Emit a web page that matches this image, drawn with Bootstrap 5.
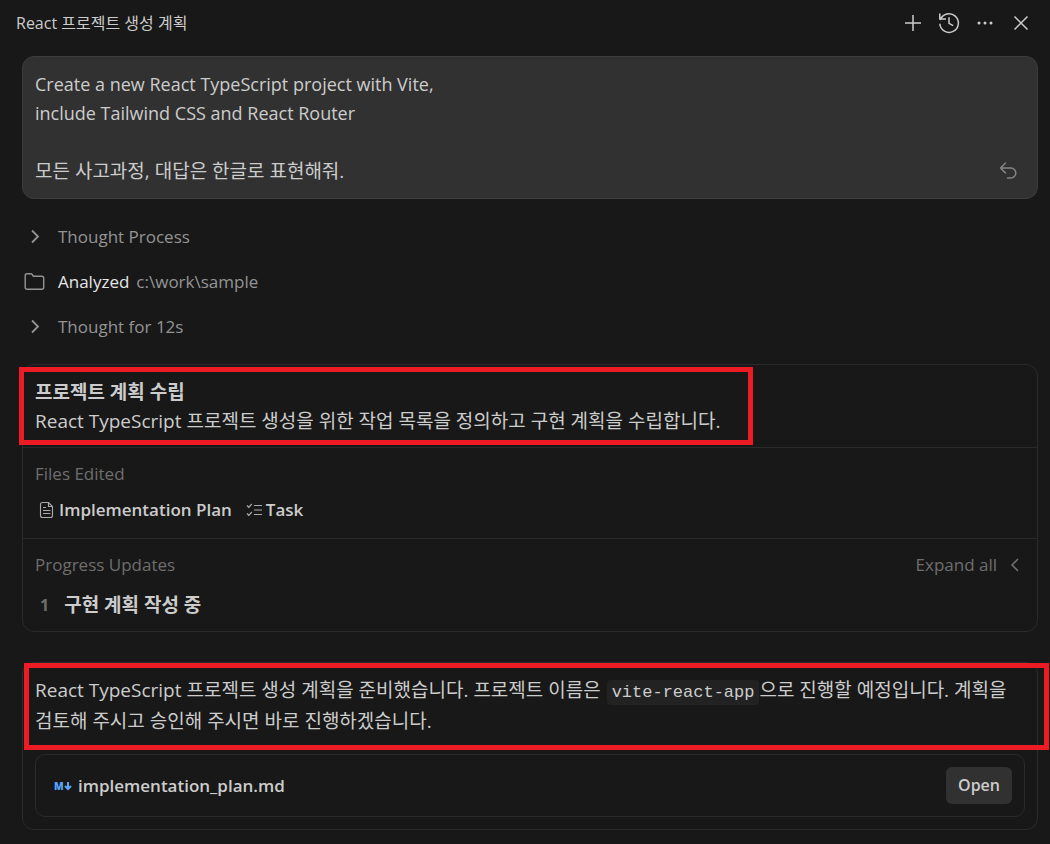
<!DOCTYPE html>
<html lang="ko" data-bs-theme="dark">
<head>
<meta charset="utf-8">
<meta name="viewport" content="width=device-width, initial-scale=1">
<title>React 프로젝트 생성 계획</title>
<link href="https://cdn.jsdelivr.net/npm/bootstrap@5.3.0/dist/css/bootstrap.min.css" rel="stylesheet">
<script src="https://cdn.jsdelivr.net/npm/bootstrap@5.3.0/dist/js/bootstrap.bundle.min.js" defer></script>
<style>
  :root { --line: #2b2b2b; --ink: #cccccc; --dim: #949494; --faint: #6e6e6e; --field: #313131; }
  body { background: #181818; color: var(--ink); font-family: "Open Sans", "Noto Sans CJK KR", sans-serif; font-size: 19px; line-height: 29px; }
  svg { flex: none; fill: none; stroke: currentColor; overflow: visible; }

  .topbar { height: 46px; padding: 0 17px 0 16px; }
  .topbar h1 { font-size: 16px; line-height: 24px; color: var(--ink); }
  .tools { gap: 12px; }
  .plain-btn { display: flex; align-items: center; padding: 0; border: 0; background: none; color: var(--ink); }
  .plain-btn:hover { color: #ffffff; }

  .thread { padding: 10px 12px 14px 22px; }
  .panel { border: 1px solid var(--line); border-radius: 12px; }
  .prompt { background: var(--field); border-color: #3c3c3c; padding: 13px 16px 12px 12px; }
  .prompt .latin { font-size: 18px; }
  .prompt .plain-btn { color: #858585; height: 29px; }

  .steps { padding: 24px 0 23px; gap: 17px; }
  .step { gap: 12px; font-size: 17px; line-height: 28px; color: var(--dim); }
  .step .target { margin-left: 7px; }
  .step .strong-text { color: #e6e6e6; }

  .sect { padding: 12px; }
  .sect + .sect { border-top: 1px solid var(--line); }
  .caption-text { font-size: 17px; line-height: 27px; font-weight: 400; margin: 0; color: var(--faint); }
  .files { gap: 14px; padding: 9px 4px 3px; }
  .file-link { display: flex; align-items: center; gap: 4px; font-size: 17px; font-weight: 600; line-height: 27px; color: var(--ink); text-decoration: none; }
  .files svg { color: #aaaaaa; }
  .updates { gap: 15px; padding: 13px 5px 0; line-height: 28px; }
  .step-no { font-size: 16px; font-weight: 700; color: var(--faint); }

  .marked { position: relative; }
  .marked::after { content: ""; position: absolute; border: 5px solid #ed1c24; pointer-events: none; }
  .summary { width: fit-content; padding-top: 1px; margin-bottom: -1px; }
  .summary::after { inset: -10px -33px -9px -16px; }
  .reply { margin-top: 30px; }
  .reply-text { padding: 12px 12px 17px; line-height: 31px; }
  .reply-text::after { inset: 0 -12px 4px 1px; }
  .reply-text code { font-family: "Liberation Mono", monospace; font-size: 17px; line-height: 20px; color: var(--ink); background: #222222; border-radius: 4px; margin-left: 1px; padding: 3px 5px; }

  .doc { border: 1px solid var(--line); border-radius: 10px; margin: 0 12px 12px; padding: 12px 12px 12px 17px; }
  .doc .file-link { gap: 6px; }
  .md-mark { color: #58a6ff; }
  .md-mark text { font: 800 10px "Open Sans", sans-serif; fill: currentColor; stroke: none; }
  .open-btn { background: var(--field); color: var(--ink); font-size: 16px; font-weight: 600; line-height: 25px; padding: 6px 12px; border: 0; border-radius: 6px; }
</style>
</head>
<body>
<header class="topbar d-flex align-items-center justify-content-between">
  <h1 class="m-0 fw-normal">React 프로젝트 생성 계획</h1>
  <div class="tools d-flex">
    <button type="button" class="plain-btn" aria-label="New conversation"><svg width="24" height="24" stroke-width="1.5"><path d="M12 4v16M4 12h16"/></svg></button>
    <button type="button" class="plain-btn" aria-label="History"><svg width="24" height="24" stroke-width="1.5"><path d="M3.3 9A9.3 9.3 0 1 1 2.8 12.8M2.8 2.5V8H9M12 6.3V12.3L16.2 14.6"/></svg></button>
    <button type="button" class="plain-btn" aria-label="More"><svg width="24" height="24"><g fill="currentColor" stroke="none"><circle cx="6" cy="12" r="1.5"/><circle cx="12" cy="12" r="1.5"/><circle cx="18" cy="12" r="1.5"/></g></svg></button>
    <button type="button" class="plain-btn" aria-label="Close"><svg width="24" height="24" stroke-width="1.5"><path d="M5.5 5.5l13 13M18.5 5.5l-13 13"/></svg></button>
  </div>
</header>

<main class="thread">
  <section class="panel prompt d-flex align-items-end justify-content-between">
    <div>
      <div class="latin">Create a new React TypeScript project with Vite,<br>include Tailwind CSS and React Router</div>
      <br>
      <div>모든 사고과정, 대답은 한글로 표현해줘.</div>
    </div>
    <button type="button" class="plain-btn" aria-label="Undo"><svg width="24" height="24" stroke-width="1.5" stroke-linecap="round" stroke-linejoin="round"><path d="M8.500 3L3.500 8l5 5M3.500 8h10.300a5 5 0 0 1 0 10H10.500"/></svg></button>
  </section>

  <div class="steps d-flex flex-column align-items-start">
    <button type="button" class="plain-btn step"><svg width="24" height="24" stroke-width="1.8"><path d="M10 5.500l6 6-6 6"/></svg>Thought Process</button>
    <div class="step d-flex align-items-center"><svg width="24" height="24" stroke-width="1.4"><path d="M5 3.700h3.600q1 0 1.600.8l1.200 1.700h8.300q2 0 2 2v9q0 2-2 2H5.200q-2 0-2-2V5.700q0-2 1.800-2z"/></svg><span><span class="strong-text">Analyzed</span><span class="target">c:\work\sample</span></span></div>
    <button type="button" class="plain-btn step"><svg width="24" height="24" stroke-width="1.8"><path d="M10 5.500l6 6-6 6"/></svg>Thought for 12s</button>
  </div>

  <section class="panel">
    <div class="sect">
      <div class="summary marked">
        <div class="fw-bold">프로젝트 계획 수립</div>
        <div>React TypeScript 프로젝트 생성을 위한 작업 목록을 정의하고 구현 계획을 수립합니다.</div>
      </div>
    </div>
    <div class="sect">
      <h2 class="caption-text">Files Edited</h2>
      <div class="files d-flex">
        <a href="#" class="file-link"><svg width="16" height="18" stroke-width="1.1"><path d="M9.500 1.500H3.500q-2 0-2 2v11q0 2 2 2h8q2 0 2-2V5.500zM9.500 1.500v4h4M4 6.500h3M4 9.500h7.500M4 12.500h7.500"/></svg>Implementation Plan</a>
        <a href="#" class="file-link"><svg width="16" height="18" stroke-width="1.2"><path d="M1 4.500l1.800 1.800L5.800 3M1 12.500l1.800 1.800 3-3.300M8 4.500h8M8 9h8M8 13.500h8"/></svg>Task</a>
      </div>
    </div>
    <div class="sect">
      <div class="d-flex justify-content-between">
        <h2 class="caption-text">Progress Updates</h2>
        <button type="button" class="plain-btn caption-text gap-2">Expand all<svg width="20" height="20" stroke-width="1.6"><path d="M13 4L7 10l6 6"/></svg></button>
      </div>
      <div class="updates d-flex"><span class="step-no">1</span><span class="fw-semibold">구현 계획 작성 중</span></div>
    </div>
  </section>

  <section class="panel reply">
    <p class="reply-text marked m-0">React TypeScript 프로젝트 생성 계획을 준비했습니다. 프로젝트 이름은 <code>vite-react-app</code>으로 진행할 예정입니다. 계획을 검토해 주시고 승인해 주시면 바로 진행하겠습니다.</p>
    <div class="doc d-flex align-items-center justify-content-between">
      <a href="#" class="file-link"><svg class="md-mark" width="19" height="12" stroke-width="2"><text x="1" y="10">M</text><path d="M15 2v7M12 6l3 3 3-3"/></svg>implementation_plan.md</a>
      <button type="button" class="open-btn">Open</button>
    </div>
  </section>
</main>
</body>
</html>
